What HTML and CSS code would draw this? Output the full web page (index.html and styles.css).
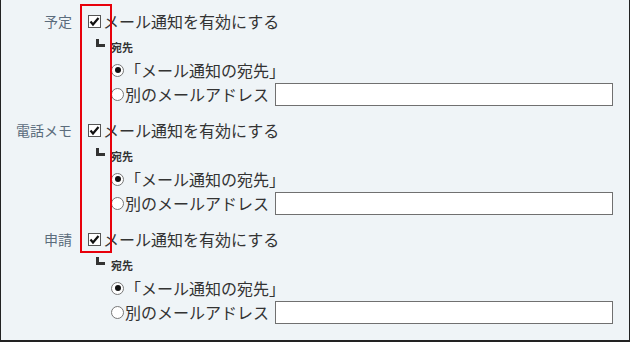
FILE: index.html
```html
<!DOCTYPE html>
<html lang="ja">
<head>
<meta charset="utf-8">
<link rel="stylesheet" href="styles.css">
</head>
<body>
<div class="frame">
  <div class="sections">
    <div class="section">
      <div class="row-main">
        <span class="label">予定</span>
        <span class="checkbox"><svg viewBox="0 0 13 13" width="13" height="13"><path d="M2.5 6.5 L5 9.5 L10.5 3" fill="none" stroke="#111" stroke-width="2.2"/></svg></span>
        <span class="main-text">メール通知を有効にする</span>
      </div>
      <div class="row-sub"><span class="elbow"></span><span class="sub-title">宛先</span></div>
      <div class="row-radio"><span class="radio checked"></span><span class="opt-text">「メール通知の宛先」</span></div>
      <div class="row-radio"><span class="radio"></span><span class="opt-text">別のメールアドレス</span><input class="addr" type="text"></div>
    </div>
    <div class="section">
      <div class="row-main">
        <span class="label">電話メモ</span>
        <span class="checkbox"><svg viewBox="0 0 13 13" width="13" height="13"><path d="M2.5 6.5 L5 9.5 L10.5 3" fill="none" stroke="#111" stroke-width="2.2"/></svg></span>
        <span class="main-text">メール通知を有効にする</span>
      </div>
      <div class="row-sub"><span class="elbow"></span><span class="sub-title">宛先</span></div>
      <div class="row-radio"><span class="radio checked"></span><span class="opt-text">「メール通知の宛先」</span></div>
      <div class="row-radio"><span class="radio"></span><span class="opt-text">別のメールアドレス</span><input class="addr" type="text"></div>
    </div>
    <div class="section">
      <div class="row-main">
        <span class="label">申請</span>
        <span class="checkbox"><svg viewBox="0 0 13 13" width="13" height="13"><path d="M2.5 6.5 L5 9.5 L10.5 3" fill="none" stroke="#111" stroke-width="2.2"/></svg></span>
        <span class="main-text">メール通知を有効にする</span>
      </div>
      <div class="row-sub"><span class="elbow"></span><span class="sub-title">宛先</span></div>
      <div class="row-radio"><span class="radio checked"></span><span class="opt-text">「メール通知の宛先」</span></div>
      <div class="row-radio"><span class="radio"></span><span class="opt-text">別のメールアドレス</span><input class="addr" type="text"></div>
    </div>
  </div>
  <div class="highlight"></div>
</div>
</body>
</html>
```

FILE: styles.css
```css
html, body {
  margin: 0;
  padding: 0;
}
body {
  font-family: "Noto Sans CJK JP", "Noto Sans", sans-serif;
  color: #333;
}
.frame {
  position: relative;
  box-sizing: border-box;
  width: 630px;
  height: 342px;
  background: #eff4f7;
  border-left: 1px solid #222;
  border-right: 1px solid #222;
  border-bottom: 2px solid #222;
}
.sections {
  display: flex;
  flex-direction: column;
  gap: 13px;
  padding-top: 10px;
}
.section {
  display: flex;
  flex-direction: column;
}
.row-main {
  display: flex;
  align-items: center;
  height: 22px;
}
.label {
  box-sizing: border-box;
  width: 72px;
  margin-left: -1px;
  text-align: right;
  font-size: 14px;
  color: #5b6c7c;
  line-height: 22px;
}
.checkbox {
  box-sizing: border-box;
  width: 13px;
  height: 13px;
  margin-left: 16px;
  border: 1px solid #555;
  background: #fff;
  display: flex;
  align-items: center;
  justify-content: center;
}
.checkbox svg {
  display: block;
  flex: none;
}
.main-text {
  margin-left: 2px;
  font-size: 16px;
  line-height: 22px;
}
.row-sub {
  display: flex;
  align-items: flex-start;
  height: 26px;
  padding-left: 95px;
  box-sizing: border-box;
}
.elbow {
  box-sizing: border-box;
  width: 9px;
  height: 8px;
  margin-top: 7px;
  border-left: 3px solid #333;
  border-bottom: 3px solid #333;
}
.sub-title {
  margin-left: 6px;
  margin-top: 9px;
  font-size: 11px;
  font-weight: bold;
  line-height: 12px;
}
.row-radio {
  display: flex;
  align-items: center;
  height: 24px;
  padding-left: 110px;
}
.radio {
  box-sizing: border-box;
  width: 13px;
  height: 13px;
  border-radius: 50%;
  border: 1px solid #777;
  background: #fff;
  display: flex;
  align-items: center;
  justify-content: center;
}
.radio.checked::after {
  content: "";
  width: 6px;
  height: 6px;
  border-radius: 50%;
  background: #111;
}
.opt-text {
  margin-left: 1px;
  font-size: 16px;
  line-height: 22px;
}
.addr {
  box-sizing: border-box;
  width: 338px;
  height: 23px;
  margin: 0 0 0 6px;
  padding: 0;
  border: 1px solid #707070;
  background: #fff;
  outline: none;
}
.highlight {
  position: absolute;
  left: 79px;
  top: 4px;
  width: 32px;
  height: 249px;
  box-sizing: border-box;
  border: 2px solid #e8000b;
}
```
